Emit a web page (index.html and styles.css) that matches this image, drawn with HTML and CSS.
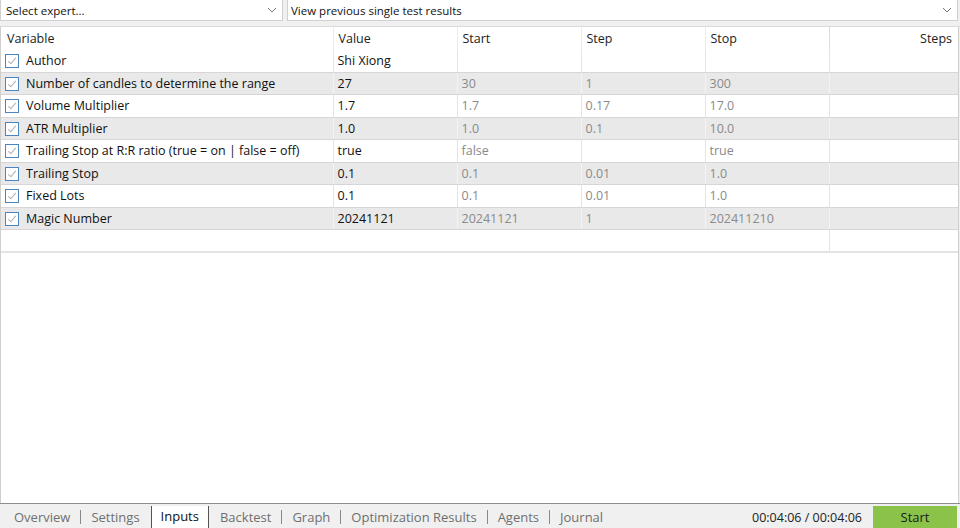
FILE: index.html
```html
<!DOCTYPE html>
<html lang="en">
<head>
    <meta charset="UTF-8">
    <title>Strategy Tester</title>
    <link rel="stylesheet" href="styles.css">
</head>
<body>

    <div class="toolbar">
        <div class="select expert">
            <span>Select expert...</span>
            <svg class="caret" width="10" height="6" viewBox="0 0 10 6"><path d="M1 1 L5 5 L9 1" fill="none" stroke="#777" stroke-width="1"/></svg>
        </div>
        <div class="select results">
            <span>View previous single test results</span>
            <svg class="caret" width="10" height="6" viewBox="0 0 10 6"><path d="M1 1 L5 5 L9 1" fill="none" stroke="#777" stroke-width="1"/></svg>
        </div>
    </div>

    <div class="grid-area">
        <table class="inputs">
            <colgroup>
                <col class="c-var"><col class="c-num"><col class="c-num"><col class="c-num"><col class="c-num"><col>
            </colgroup>
            <thead>
                <tr>
                    <th>Variable</th>
                    <th>Value</th>
                    <th>Start</th>
                    <th>Step</th>
                    <th>Stop</th>
                    <th class="right">Steps</th>
                </tr>
            </thead>
            <tbody>
                <tr>
                    <td><span class="check"></span>Author</td>
                    <td class="val">Shi Xiong</td>
                    <td></td><td></td><td></td><td></td>
                </tr>
                <tr class="alt">
                    <td><span class="check"></span>Number of candles to determine the range</td>
                    <td class="val">27</td>
                    <td>30</td><td>1</td><td>300</td><td></td>
                </tr>
                <tr>
                    <td><span class="check"></span>Volume Multiplier</td>
                    <td class="val">1.7</td>
                    <td>1.7</td><td>0.17</td><td>17.0</td><td></td>
                </tr>
                <tr class="alt">
                    <td><span class="check"></span>ATR Multiplier</td>
                    <td class="val">1.0</td>
                    <td>1.0</td><td>0.1</td><td>10.0</td><td></td>
                </tr>
                <tr>
                    <td><span class="check"></span>Trailing Stop at R:R ratio (true = on | false = off)</td>
                    <td class="val">true</td>
                    <td>false</td><td></td><td>true</td><td></td>
                </tr>
                <tr class="alt">
                    <td><span class="check"></span>Trailing Stop</td>
                    <td class="val">0.1</td>
                    <td>0.1</td><td>0.01</td><td>1.0</td><td></td>
                </tr>
                <tr>
                    <td><span class="check"></span>Fixed Lots</td>
                    <td class="val">0.1</td>
                    <td>0.1</td><td>0.01</td><td>1.0</td><td></td>
                </tr>
                <tr class="alt">
                    <td><span class="check"></span>Magic Number</td>
                    <td class="val">20241121</td>
                    <td>20241121</td><td>1</td><td>202411210</td><td></td>
                </tr>
                <tr class="empty">
                    <td colspan="5"></td>
                    <td></td>
                </tr>
            </tbody>
        </table>
    </div>

    <div class="tabbar">
        <div class="tabs">
            <span class="tab">Overview</span>
            <span class="tab">Settings</span>
            <span class="tab active">Inputs</span>
            <span class="tab">Backtest</span>
            <span class="tab">Graph</span>
            <span class="tab">Optimization Results</span>
            <span class="tab">Agents</span>
            <span class="tab">Journal</span>
        </div>
        <span class="timer">00:04:06 / 00:04:06</span>
        <button class="start-btn">Start</button>
    </div>

</body>
</html>
```

FILE: styles.css
```css
body {
    margin: 0;
    width: 960px;
    height: 528px;
    overflow: hidden;
    font-family: 'Open Sans', 'Noto Sans', sans-serif;
    font-size: 12.5px;
    color: #1a1a1a;
    background: #f0f0f0;
    display: flex;
    flex-direction: column;
}

.toolbar {
    display: flex;
    gap: 4px;
    padding: 0 2px 5px 0;
    height: 21px;
    border-bottom: 1px solid #d9d9d9;
}

.select {
    display: flex;
    align-items: center;
    justify-content: space-between;
    background: white;
    border: 1px solid #d0d0d0;
    border-top: none;
    padding: 0 5px 0 5px;
    font-size: 11.5px;
    color: #111;
}

.select.expert {
    width: 271px;
}

.select.results {
    flex: 1;
    padding-left: 3px;
}

.grid-area {
    flex: 1;
    background: white;
    border-left: 1px solid #cfcfcf;
    border-right: 1px solid #cfcfcf;
    margin-right: 1px;
}

.inputs {
    border-collapse: collapse;
    width: 100%;
    table-layout: fixed;
}

.c-var {
    width: 332px;
}

.c-num {
    width: 124px;
}

.inputs th {
    font-weight: normal;
    font-size: 12.5px;
    text-align: left;
    color: #222;
    height: 23px;
    padding: 0 5px;
    border-left: 1px solid #ececec;
}

.inputs th:first-child {
    padding-left: 6px;
    border-left: none;
}

.inputs th:last-child {
    border-left: 1px solid #dcdcdc;
}

.inputs th.right {
    text-align: right;
    padding-right: 6px;
}

.inputs td {
    height: 21.5px;
    padding: 0 4px;
    color: #8a8a8a;
    border-left: 1px solid #e4e4e4;
    border-bottom: 1px solid #d6d6d6;
    white-space: nowrap;
    overflow: hidden;
}

.inputs td:first-child {
    border-left: none;
    color: #111;
    padding-left: 4px;
}

.inputs td.val {
    color: #111;
}

.inputs tr.alt td {
    background: #e9e9e9;
    border-left-color: #f4f4f4;
}

.inputs tr.empty td {
    height: 21px;
    border-bottom: 2px solid #e3e3e3;
}

.check {
    display: inline-block;
    width: 12px;
    height: 12px;
    border: 1px solid #4a86c0;
    background: white;
    margin-right: 7px;
    vertical-align: -3px;
    position: relative;
}

.check::after {
    content: "";
    position: absolute;
    left: 4px;
    top: 1px;
    width: 3px;
    height: 7px;
    border: solid #b0b0b0;
    border-width: 0 1px 1px 0;
    transform: rotate(40deg);
}

.tabbar {
    display: flex;
    align-items: flex-end;
    height: 24px;
    border-top: 1px solid #8c8c8c;
    background: #f0f0f0;
}

.tabs {
    display: flex;
    align-items: center;
    flex: 1;
    height: 22px;
    padding-left: 4px;
}

.tab {
    color: #6f6f6f;
    padding: 0 10px;
    font-size: 13px;
    border-left: 1px solid #8a8a8a;
    line-height: 14px;
}

.tab:first-child {
    border-left: none;
}

.tab.active {
    color: #111;
    background: white;
    border: 1px solid #555;
    border-top: none;
    line-height: 21px;
    height: 22px;
    margin: 0 1px;
    padding: 0 9px;
}

.tab.active + .tab {
    border-left: none;
}

.timer {
    font-size: 12.5px;
    color: #222;
    align-self: center;
    margin-right: 11px;
    margin-top: 2px;
}

.start-btn {
    background: #8bc34a;
    color: #1a1a1a;
    border: none;
    width: 84px;
    height: 22px;
    font-family: inherit;
    font-size: 13px;
    margin-right: 3px;
    padding: 0;
}
```
